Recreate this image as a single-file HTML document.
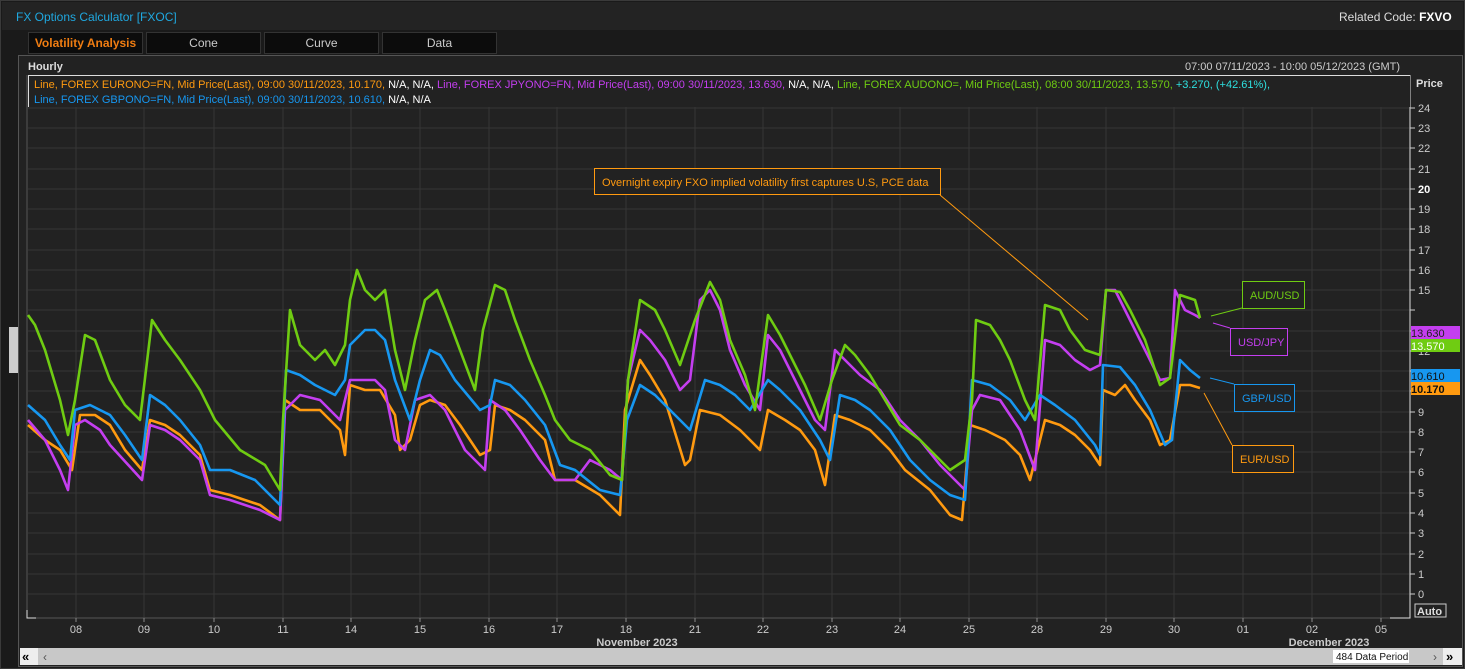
<!DOCTYPE html>
<html><head><meta charset="utf-8"><style>
*{margin:0;padding:0;box-sizing:border-box}
body{width:1465px;height:669px;background:#141414;font-family:"Liberation Sans",sans-serif;overflow:hidden;position:relative}
.t{position:absolute;white-space:nowrap}
</style></head><body>
<div style="position:absolute;left:0;top:0;width:1465px;height:669px;border:1px solid #3a3a3a;background:#1a1a1a"></div>
<div style="position:absolute;left:2px;top:2px;width:1461px;height:28px;background:#232323"></div>
<div class="t" style="left:16px;top:10px;font-size:12px;color:#1fa8e0">FX Options Calculator [FXOC]</div>
<div class="t" style="left:1339px;top:10px;font-size:12px;color:#ddd">Related Code: <b style="color:#fff">FXVO</b></div>
<div class="t" style="left:28px;top:32px;width:115px;height:22px;background:#0c0c0c;border:1px solid #333;color:#f07d12;font-weight:bold;font-size:12px;text-align:center;line-height:21px">Volatility Analysis</div>
<div class="t" style="left:146px;top:32px;width:115px;height:22px;background:#0c0c0c;border:1px solid #333;color:#ccc;font-size:12px;text-align:center;line-height:21px">Cone</div>
<div class="t" style="left:264px;top:32px;width:115px;height:22px;background:#0c0c0c;border:1px solid #333;color:#ccc;font-size:12px;text-align:center;line-height:21px">Curve</div>
<div class="t" style="left:382px;top:32px;width:115px;height:22px;background:#0c0c0c;border:1px solid #333;color:#ccc;font-size:12px;text-align:center;line-height:21px">Data</div>
<div style="position:absolute;left:18px;top:55px;width:1445px;height:612px;border:1px solid #555;background:#222"></div>
<div style="position:absolute;left:9px;top:327px;width:9px;height:46px;background:#ccc"></div>
<div class="t" style="left:28px;top:61px;font-size:11px;color:#ddd;font-weight:bold">Hourly</div>
<div class="t" style="left:1185px;top:61px;font-size:11px;color:#ccc">07:00 07/11/2023 - 10:00 05/12/2023 (GMT)</div>
<svg style="position:absolute;left:0;top:0" width="1465" height="669" font-family="Liberation Sans, sans-serif">
<g stroke="#363636" stroke-width="1">
<path d="M76 75V618M144 75V618M214 75V618M283 75V618M351 75V618M420 75V618M489 75V618M557 75V618M626 75V618M695 75V618M763 75V618M832 75V618M900 75V618M969 75V618M1037 75V618M1106 75V618M1174 75V618M1243 75V618M1312 75V618M1381 75V618"/>
<path d="M28 594H1410M28 574H1410M28 554H1410M28 533H1410M28 513H1410M28 493H1410M28 472H1410M28 452H1410M28 432H1410M28 412H1410M28 391H1410M28 371H1410M28 351H1410M28 331H1410M28 310H1410M28 290H1410M28 270H1410M28 250H1410M28 229H1410M28 209H1410M28 189H1410M28 169H1410M28 148H1410M28 128H1410M28 108H1410M28 88H1410"/>
</g>
<path d="M27 618H1390M27 75V618" fill="none" stroke="#555" stroke-width="1"/>
<path d="M27 610V618H36M1390 618H1410V75" fill="none" stroke="#ddd" stroke-width="1"/>
<g stroke="#ccc"><path d="M1410 594h5M1410 574h5M1410 554h5M1410 533h5M1410 513h5M1410 493h5M1410 472h5M1410 452h5M1410 432h5M1410 412h5M1410 391h5M1410 371h5M1410 351h5M1410 331h5M1410 310h5M1410 290h5M1410 270h5M1410 250h5M1410 229h5M1410 209h5M1410 189h5M1410 169h5M1410 148h5M1410 128h5M1410 108h5"/></g>
<g stroke="#888"><path d="M76 618v4M144 618v4M214 618v4M283 618v4M351 618v4M420 618v4M489 618v4M557 618v4M626 618v4M695 618v4M763 618v4M832 618v4M900 618v4M969 618v4M1037 618v4M1106 618v4M1174 618v4M1243 618v4M1312 618v4M1381 618v4"/></g>
<g fill="#ccc" font-size="11">
<text x="1418" y="598">0</text><text x="1418" y="578">1</text><text x="1418" y="558">2</text><text x="1418" y="537">3</text><text x="1418" y="517">4</text><text x="1418" y="497">5</text><text x="1418" y="476">6</text><text x="1418" y="456">7</text><text x="1418" y="436">8</text><text x="1418" y="416">9</text><text x="1418" y="355">12</text><text x="1418" y="294">15</text><text x="1418" y="274">16</text><text x="1418" y="254">17</text><text x="1418" y="233">18</text><text x="1418" y="213">19</text><text x="1418" y="193" font-weight="bold" fill="#fff">20</text><text x="1418" y="173">21</text><text x="1418" y="152">22</text><text x="1418" y="132">23</text><text x="1418" y="112">24</text>
<text x="1416" y="87" font-weight="bold" fill="#ddd">Price</text>
</g>
<rect x="1415" y="604" width="31" height="13" fill="none" stroke="#ccc"/>
<text x="1417" y="615" fill="#ddd" font-size="11" font-weight="bold">Auto</text>
<g fill="#ccc" font-size="11" text-anchor="middle">
<text x="76" y="633">08</text><text x="144" y="633">09</text><text x="214" y="633">10</text><text x="283" y="633">11</text><text x="351" y="633">14</text><text x="420" y="633">15</text><text x="489" y="633">16</text><text x="557" y="633">17</text><text x="626" y="633">18</text><text x="695" y="633">21</text><text x="763" y="633">22</text><text x="832" y="633">23</text><text x="900" y="633">24</text><text x="969" y="633">25</text><text x="1037" y="633">28</text><text x="1106" y="633">29</text><text x="1174" y="633">30</text><text x="1243" y="633">01</text><text x="1312" y="633">02</text><text x="1381" y="633">05</text>
<text x="637" y="646" font-weight="bold">November 2023</text><text x="1329" y="646" font-weight="bold">December 2023</text>
</g>
<g fill="none" stroke-width="2.6" stroke-linejoin="round">
<polyline stroke="#ff9a10" points="28,425 45,440 60,450 72,470 80,415 95,415 110,425 125,450 142,470 150,420 165,425 180,435 200,455 210,490 230,495 260,505 280,520 285,400 300,410 320,410 340,430 345,455 350,385 365,390 380,390 395,415 400,450 410,440 420,405 430,400 445,405 460,425 480,455 490,450 495,405 510,410 525,420 545,440 555,480 575,480 600,495 620,515 625,410 640,360 650,375 665,400 685,465 690,460 700,410 720,415 740,430 760,450 768,410 785,420 800,430 815,450 825,485 835,415 850,420 870,430 890,450 905,470 930,490 950,515 962,520 970,425 985,430 1005,440 1020,455 1030,480 1045,420 1060,425 1075,435 1090,450 1100,465 1103,390 1115,395 1125,385 1135,400 1150,420 1160,445 1170,440 1180,385 1190,385 1200,388"/>
<polyline stroke="#c43ef0" points="28,420 45,440 60,470 68,490 75,425 85,420 100,430 110,445 142,480 150,425 165,430 180,440 200,460 210,495 230,500 260,510 280,520 285,410 300,395 320,400 340,420 350,380 360,380 375,380 385,390 395,440 405,450 415,400 430,395 445,410 465,450 485,470 490,400 505,410 520,430 540,460 555,480 575,480 590,460 610,470 622,480 628,380 640,330 650,340 665,360 680,390 690,380 700,300 710,290 720,310 730,350 745,385 760,410 768,335 780,350 800,390 815,420 825,430 835,350 845,360 860,375 880,390 900,420 920,440 940,465 955,480 965,490 972,410 980,395 1000,400 1020,430 1035,470 1045,340 1060,345 1075,360 1090,370 1100,365 1106,290 1115,290 1125,310 1140,340 1160,380 1170,378 1175,290 1185,310 1195,315 1200,318"/>
<polyline stroke="#1797f0" points="28,405 45,420 60,445 70,460 75,410 90,405 110,415 125,435 142,460 150,395 165,405 180,420 200,445 210,470 230,470 255,480 280,505 286,370 300,375 315,385 335,395 345,380 350,345 365,330 375,330 385,340 395,380 410,420 420,380 430,350 440,355 455,380 480,410 490,405 495,380 510,385 525,400 545,425 560,465 575,470 600,490 620,495 627,420 640,385 655,395 670,410 690,430 705,380 720,385 735,395 750,410 768,380 780,390 800,410 820,440 830,460 840,395 855,400 870,410 890,430 910,460 930,480 950,495 965,500 972,380 990,385 1010,400 1025,420 1040,395 1055,405 1075,420 1095,445 1100,455 1103,365 1120,367 1135,385 1150,410 1165,445 1172,440 1180,360 1190,370 1200,378"/>
<polyline stroke="#6fcc12" points="28,315 35,325 45,350 60,400 68,435 75,400 85,335 95,340 110,380 125,405 140,420 152,320 165,340 180,360 200,390 215,420 240,450 265,465 280,490 283,420 290,310 300,345 315,360 325,350 335,365 345,345 350,300 357,270 365,290 375,300 385,290 395,350 405,390 415,340 425,300 437,290 445,310 460,350 475,390 483,330 495,285 505,290 515,320 530,360 545,395 555,420 570,440 590,450 610,475 622,480 628,380 640,300 655,310 665,330 680,365 695,320 710,282 720,300 730,340 745,375 755,410 768,315 780,335 790,355 805,385 820,420 832,380 845,345 855,355 870,375 885,400 900,425 920,440 940,460 950,470 965,460 972,400 976,320 990,325 1000,340 1010,360 1025,400 1035,420 1045,305 1060,310 1070,330 1085,350 1100,355 1106,290 1120,292 1130,310 1145,340 1160,385 1170,378 1180,295 1195,300 1200,318"/>
</g>
<g font-size="11" stroke-width="1">
<rect x="594.5" y="168.5" width="346" height="26" fill="#222" stroke="#ff9a10"/>
<text x="602" y="186" fill="#ff9a10">Overnight expiry FXO implied volatility first captures U.S, PCE data</text>
<path d="M940 195L1088 320" stroke="#ff9a10"/>
<rect x="1242.5" y="281.5" width="62" height="27" fill="#222" stroke="#6fcc12"/><text x="1250" y="299" fill="#6fcc12">AUD/USD</text><path d="M1211 316L1242 308" stroke="#6fcc12"/>
<rect x="1230.5" y="328.5" width="57" height="27" fill="#222" stroke="#c43ef0"/><text x="1238" y="346" fill="#c43ef0">USD/JPY</text><path d="M1213 323L1230 328" stroke="#c43ef0"/>
<rect x="1234.5" y="384.5" width="60" height="27" fill="#222" stroke="#1797f0"/><text x="1242" y="402" fill="#1797f0">GBP/USD</text><path d="M1210 378L1234 384" stroke="#1797f0"/>
<rect x="1232.5" y="445.5" width="61" height="27" fill="#222" stroke="#ff9a10"/><text x="1240" y="463" fill="#ff9a10">EUR/USD</text><path d="M1204 393L1232 445" stroke="#ff9a10"/>
</g>
<g font-size="11">
<rect x="1411" y="326" width="49" height="13" fill="#c43ef0"/><text x="1411" y="337" fill="#222">13.630</text>
<rect x="1411" y="339" width="49" height="13" fill="#6fcc12"/><text x="1411" y="350" fill="#fff">13.570</text>
<rect x="1411" y="369" width="49" height="13" fill="#1797f0"/><text x="1411" y="380" fill="#111">10.610</text>
<rect x="1411" y="382" width="49" height="13" fill="#ff9a10"/><text x="1411" y="393" fill="#111" font-weight="bold">10.170</text>
</g>
<rect x="20" y="648" width="1442" height="17" fill="#c8c8c8"/>
<rect x="20" y="648" width="18" height="17" fill="#eee"/><text x="22" y="661" font-size="13" font-weight="bold">«</text>
<text x="43" y="661" font-size="12" fill="#555">‹</text>
<rect x="1333" y="650" width="76" height="13" fill="#fff"/><text x="1336" y="660" font-size="10" fill="#111">484 Data Period</text>
<text x="1433" y="661" font-size="12" fill="#555">›</text>
<rect x="1443" y="648" width="19" height="17" fill="#eee"/><text x="1446" y="661" font-size="13" font-weight="bold">»</text>
</svg>
<div class="t" style="left:28px;top:75px;width:1382px;height:32px;border-left:1px solid #ddd;border-top:1px solid #ddd;background:#222"></div>
<div class="t" style="left:34px;top:78px;font-size:11px;line-height:15px">
<span style="color:#ff9a10">Line, FOREX EURONO=FN, Mid Price(Last), 09:00 30/11/2023, 10.170, </span><span style="color:#fff">N/A, N/A, </span><span style="color:#c43ef0">Line, FOREX JPYONO=FN, Mid Price(Last), 09:00 30/11/2023, 13.630, </span><span style="color:#fff">N/A, N/A, </span><span style="color:#6fcc12">Line, FOREX AUDONO=, Mid Price(Last), 08:00 30/11/2023, 13.570, </span><span style="color:#2ee0e0">+3.270, (+42.61%),</span><br>
<span style="color:#1797f0">Line, FOREX GBPONO=FN, Mid Price(Last), 09:00 30/11/2023, 10.610, </span><span style="color:#fff">N/A, N/A</span></div>
</body></html>
